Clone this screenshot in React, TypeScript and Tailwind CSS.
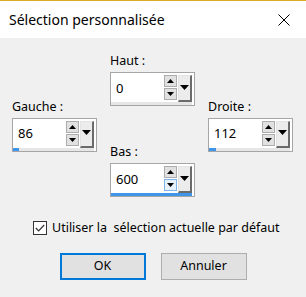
import React from "react";

const font = { fontFamily: '"Noto Sans", "Open Sans", sans-serif' };

const UpTri = () => (
  <svg width="7" height="4" viewBox="0 0 7 4">
    <polygon points="0,4 7,4 3.5,0" fill="#000" />
  </svg>
);

const DownTri = ({ w = 7, h = 4 }: { w?: number; h?: number }) => (
  <svg width={w} height={h} viewBox={`0 0 ${w} ${h}`}>
    <polygon points={`0,0 ${w},0 ${w / 2},${h}`} fill="#000" />
  </svg>
);

type SpinProps = {
  label: string;
  value: string;
  fill: string;
  downHover?: boolean;
  className?: string;
};

const Spinner = ({ label, value, fill, downHover, className }: SpinProps) => (
  <div className={`flex flex-col ${className ?? ""}`}>
    <span className="text-[12.5px] leading-[16px] text-black">{label}</span>
    <div className="mt-[3px] flex h-[34px] w-[85px] flex-col border border-[#a6a6a6] bg-white pt-[2px]">
      <div className="flex h-[27px] pl-[1px] pr-[2px]">
        <div className="flex flex-1 items-center pl-[4px] text-[13px] text-black">{value}</div>
        <div className="flex w-[13px] flex-col gap-[1px]">
          <div className="flex h-[12px] items-center justify-center border border-[#adadad] bg-[#e1e1e1]">
            <UpTri />
          </div>
          <div
            className={`flex h-[12px] items-center justify-center border ${
              downHover ? "border-[#7eb4ea] bg-[#e5f1fb]" : "border-[#adadad] bg-[#e1e1e1]"
            }`}
          >
            <DownTri />
          </div>
        </div>
        <div className="ml-[1px] flex h-[27px] w-[14px] items-center justify-center border-t border-l border-r-2 border-b-2 border-t-[#e3e3e3] border-l-[#e3e3e3] border-r-[#6b6b6b] border-b-[#6b6b6b] bg-[#ececec] pb-[2px]">
          <DownTri w={9} h={5} />
        </div>
      </div>
      <div className="mr-[2px] h-[3px] bg-[#e6e6e6]">
        <div className="h-full bg-[#3f95e8]" style={{ width: fill }} />
      </div>
    </div>
  </div>
);

export default function App() {
  return (
    <div className="flex h-[297px] w-[306px] flex-col bg-[#f0f0f0] text-black" style={font}>
      {/* title bar */}
      <div className="flex h-[38px] items-center justify-between border-t border-[#dcaa26] bg-white pl-[9px] pr-[16px]">
        <span className="text-[14px]">Sélection personnalisée</span>
        <svg width="12" height="12" viewBox="0 0 12 12">
          <path d="M0.5 0.5 L11.5 11.5 M11.5 0.5 L0.5 11.5" stroke="#000" strokeWidth="1" />
        </svg>
      </div>

      {/* spinners */}
      <div className="grid grid-cols-[85px_85px_85px] gap-x-[13px] pl-[12px] pt-[15px]">
        <Spinner className="self-center" label="Gauche :" value="86" fill="6px" />
        <div className="flex flex-col">
          <Spinner label="Haut :" value="0" fill="0px" />
          <Spinner className="mt-[38px]" label="Bas :" value="600" fill="100%" downHover />
        </div>
        <Spinner className="self-center" label="Droite :" value="112" fill="7px" />
      </div>

      {/* checkbox */}
      <label className="mt-[23px] flex h-[16px] items-center pl-[33px]">
        <span className="flex h-[14px] w-[14px] items-center justify-center border border-[#333] bg-white">
          <svg width="10" height="8" viewBox="0 0 10 8">
            <path d="M0.8 4 L3.6 6.8 L9.2 1" stroke="#333" strokeWidth="1.2" fill="none" />
          </svg>
        </span>
        <span className="ml-[5px] whitespace-pre text-[12.5px]">Utiliser la  sélection actuelle par défaut</span>
      </label>

      {/* buttons */}
      <div className="mt-[17px] flex justify-center gap-[15px]">
        <button className="h-[27px] w-[86px] border-2 border-[#0078d7] bg-[#e1e1e1] text-[12.5px]">OK</button>
        <button className="h-[27px] w-[86px] border border-[#adadad] bg-[#e1e1e1] text-[12.5px]">Annuler</button>
      </div>
    </div>
  );
}
